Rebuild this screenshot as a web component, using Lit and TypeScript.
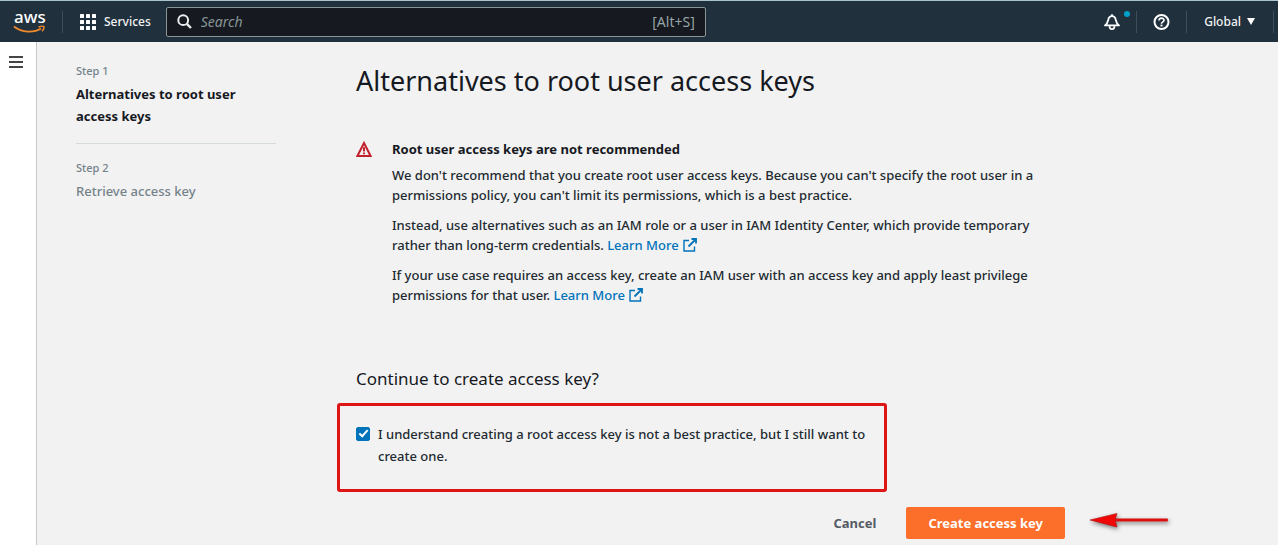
import { LitElement, html, css, svg } from "lit";
import { customElement, state } from "lit/decorators.js";

const externalIcon = html`<svg class="external" viewBox="0 0 14 14" width="14" height="14" aria-hidden="true">
  <path d="M6 2.5H1V13H11.5V8.5" stroke-width="1.4" /><path d="M8.5 1H13V5.5" /><path d="M13 1L5.5 8.5" /></svg>`;

@customElement("aws-header")
class AwsHeader extends LitElement {
  static styles = css`
    :host { display: block; }
    .bar {
      display: flex; align-items: center; height: 42px; box-sizing: border-box;
      border-top: 1px solid #a9c4ce; background: #20303c; color: #f2f3f3;
      font-size: 12px; line-height: 20px;
    }
    .logo { display: flex; flex-direction: column; margin-left: 12px; width: 50px; color: #fff; text-decoration: none; }
    .word { font-size: 17px; line-height: 16px; font-weight: 500; padding-left: 2px; }
    .logo svg { display: block; }
    .divider { width: 1px; height: 22px; background: #414d5c; flex: none; }
    button { font: inherit; color: inherit; background: none; border: 0; padding: 0; display: flex; align-items: center; }
    .services { margin-left: 17px; gap: 8px; }
    .search {
      display: flex; align-items: center; box-sizing: border-box; flex: 0 1 540px;
      height: 30px; margin-left: 15px; padding: 0 10px; gap: 9px;
      background: #16191f; border: 1px solid #879596; border-radius: 2px; color: #95a5a6; font-size: 14px; font-weight: 400;
    }
    .search input {
      flex: 1; min-width: 0; background: none; border: 0; padding: 0; outline: 0;
      font: italic 14px "Noto Sans", sans-serif; color: #fff;
    }
    .search input::placeholder { color: #879596; opacity: 1; }
    .tools { display: flex; align-items: center; margin-left: auto; }
    .bell { position: relative; margin-right: 16px; }
    .dot { position: absolute; top: -3px; right: -10px; width: 6px; height: 6px; border-radius: 50%; background: #00a1c9; }
    .help { margin: 0 16px; }
    .region { margin: 0 18px 0 17px; gap: 6px; }
    .edge { margin-right: 4px; }
  `;
  render() {
    return html`<header class="bar">
      <a class="logo" href="#">
        <span class="word">aws</span>
        <svg width="34" height="9" viewBox="0 0 34 9" fill="none" stroke="#f08a2c" aria-hidden="true">
          <path d="M2 1.5C10 8 22 8 29 3.5" stroke-width="1.8" />
          <path d="M26.5 2C29.5 1 31.5 1.1 31.8 1.6C32.2 2.6 31.5 4.7 30.1 6.2" stroke-width="1.5" />
        </svg>
      </a>
      <span class="divider"></span>
      <button class="services">
        <svg width="16" height="16" fill="#fff" aria-hidden="true">
          ${[0, 6, 12].map((y) => [0, 6, 12].map((x) => svg`<rect x=${x} y=${y} width="4" height="4" rx="0.5" />`))}
        </svg>
        Services
      </button>
      <label class="search">
        <svg width="15" height="15" viewBox="0 0 15 15" fill="none" stroke="#eaeded" stroke-width="2" aria-hidden="true">
          <circle cx="6.2" cy="6.2" r="4.9" /><path d="M9.8 9.8L14 14" stroke-width="2.4" />
        </svg>
        <input type="text" placeholder="Search" aria-label="Search" />
        <span>[Alt+S]</span>
      </label>
      <div class="tools">
        <button class="bell" aria-label="Notifications">
          <svg width="16" height="16" viewBox="0 0 16 16" fill="none" stroke="#fff" stroke-width="1.8" stroke-linejoin="round" aria-hidden="true">
            <path d="M1 11.4C3.4 9.6 3.8 8 4.2 6C4.6 3.6 6 2.2 8 2.2C10 2.2 11.4 3.6 11.8 6C12.2 8 12.6 9.6 15 11.4Z" />
            <path d="M8 0.2V2.2M5.7 12V13C5.7 14.3 6.6 15.1 8 15.1C9.4 15.1 10.3 14.3 10.3 13V12" />
          </svg>
          <span class="dot"></span>
        </button>
        <span class="divider"></span>
        <button class="help" aria-label="Help">
          <svg width="17" height="16" viewBox="0 0 17 16" fill="none" stroke="#fff" stroke-width="2" aria-hidden="true">
            <circle cx="8.5" cy="8" r="7" /><path d="M6 6.6C6 3.3 11 3.3 11 6.2C11 7.9 8.5 7.8 8.5 9.7" stroke-width="1.7" /><path d="M8.5 10.6V12.4" />
          </svg>
        </button>
        <span class="divider"></span>
        <button class="region">Global
          <svg width="8" height="7" fill="#fff" aria-hidden="true"><path d="M0 0H8L4 7Z" /></svg>
        </button>
        <span class="divider edge"></span>
      </div>
    </header>`;
  }
}

@customElement("wizard-steps")
class WizardSteps extends LitElement {
  static styles = css`
    ol { list-style: none; margin: 0; padding: 0; }
    li + li { border-top: 1px solid #d5dbdb; margin-top: 16px; padding-top: 14px; }
    .num { font-size: 11px; line-height: 20px; font-weight: 500; color: #74828a; }
    .name { font-size: 13px; line-height: 22px; font-weight: 500; color: #74828a; margin-top: 2px; }
    .current { font-weight: 700; color: #16191f; }
  `;
  render() {
    return html`<ol>
      <li><div class="num">Step 1</div><div class="name current" aria-current="step">Alternatives to root user access keys</div></li>
      <li><div class="num">Step 2</div><div class="name">Retrieve access key</div></li>
    </ol>`;
  }
}

@customElement("app-root")
class AppRoot extends LitElement {
  @state() private agreed = true;

  static styles = css`
    :host { display: flex; flex-direction: column; min-height: 100vh; background: #f2f2f2; color: #16191f; font-family: "Noto Sans", sans-serif; font-size: 13px; line-height: 20px; font-weight: 500; }
    .body { display: flex; flex: 1; }
    .rail { flex: none; width: 36px; background: #fff; border-right: 1px solid #c4c8c8; }
    .menu { display: block; border: 0; background: none; padding: 14px 9px; }
    .menu svg { display: block; }
    .page { display: flex; flex: 1; gap: 80px; padding: 19px 39px 6px; min-width: 0; }
    wizard-steps { flex: 0 0 200px; }
    main { flex: 0 1 709px; min-width: 0; }
    h1 { margin: 2px 0 0; font-size: 27px; line-height: 36px; font-weight: 400; }
    .alert { display: grid; grid-template-columns: 16px 1fr; gap: 20px; margin-top: 40px; padding-right: 16px; }
    .alert > svg { margin-top: 2px; }
    h3 { margin: 0 0 6px; font-size: 13px; line-height: 20px; font-weight: 700; }
    p { margin: 0; color: #222a31; }
    p + p { margin-top: 10px; }
    a { color: #0073bb; text-decoration: none; }
    .external { fill: none; stroke: #0073bb; stroke-width: 1.8; vertical-align: -2px; margin-left: 1px; }
    h2 { margin: 62px 0 0; font-size: 17px; line-height: 24px; font-weight: 400; }
    .consent { box-sizing: border-box; max-width: 550px; margin: 12px 0 0 -19px; padding: 17px 8px 22px 16px; border: 3px solid #dd1515; border-radius: 3px; }
    .consent label { display: flex; gap: 8px; line-height: 22px; color: #222a31; }
    input { appearance: none; box-sizing: border-box; flex: none; width: 14px; height: 14px; margin: 4px 0 0; border: 1px solid #687078; border-radius: 2px; background: #fff; display: grid; }
    input:checked { background: #0073bb; border-color: #0073bb; }
    input:checked::after { content: ""; width: 3px; height: 7px; margin: 0 0 0 4px; border: solid #fff; border-width: 0 2px 2px 0; transform: rotate(42deg); }
    .actions { position: relative; display: flex; justify-content: flex-end; gap: 8px; margin-top: 15px; }
    .btn { box-sizing: border-box; height: 32px; padding: 0 22px; border: 0; border-radius: 2px; font: 700 13px/20px "Noto Sans", sans-serif; background: none; color: #545b64; }
    .primary { background: #fb6f2b; color: #fff; }
    .pointer { position: absolute; left: calc(100% + 20px); top: 2px; filter: drop-shadow(1px 2px 2px rgb(0 0 0 / 0.5)); }
  `;

  render() {
    return html`
      <aws-header></aws-header>
      <div class="body">
        <div class="rail">
          <button class="menu" aria-label="Open navigation">
            <svg width="14" height="12" stroke="#444" stroke-width="2"><path d="M0 1H14M0 6H14M0 11H14" /></svg>
          </button>
        </div>
        <div class="page">
          <wizard-steps></wizard-steps>
          <main>
            <h1>Alternatives to root user access keys</h1>
            <section class="alert">
              <svg width="16" height="16" viewBox="0 0 16 16" fill="none" stroke="#c3202e" stroke-width="2" aria-hidden="true">
                <path d="M8 2L14.6 15H1.4Z" /><path d="M8 6.2V10.4M8 11.4V13.2" />
              </svg>
              <div>
                <h3>Root user access keys are not recommended</h3>
                <p>We don't recommend that you create root user access keys. Because you can't specify the root user in a permissions policy, you can't limit its permissions, which is a best practice.</p>
                <p>Instead, use alternatives such as an IAM role or a user in IAM Identity Center, which provide temporary rather than long-term credentials. <a href="#">Learn More ${externalIcon}</a></p>
                <p>If your use case requires an access key, create an IAM user with an access key and apply least privilege permissions for that user. <a href="#">Learn More ${externalIcon}</a></p>
              </div>
            </section>
            <h2>Continue to create access key?</h2>
            <div class="consent">
              <label>
                <input type="checkbox" .checked=${this.agreed} @change=${(e: Event) => (this.agreed = (e.target as HTMLInputElement).checked)} />
                <span>I understand creating a root access key is not a best practice, but I still want to create one.</span>
              </label>
            </div>
            <div class="actions">
              <button class="btn">Cancel</button>
              <button class="btn primary" ?disabled=${!this.agreed}>Create access key</button>
              <svg class="pointer" width="90" height="26" viewBox="0 0 90 26" aria-hidden="true">
                <path d="M28 9.4H82.5Q84 11 82.5 12.6H28Z" fill="#dd1010" />
                <path d="M5 11L32 4.5L30 11L32 18Z" fill="#f00808" stroke="#b01010" stroke-width="0.6" />
              </svg>
            </div>
          </main>
        </div>
      </div>`;
  }
}
